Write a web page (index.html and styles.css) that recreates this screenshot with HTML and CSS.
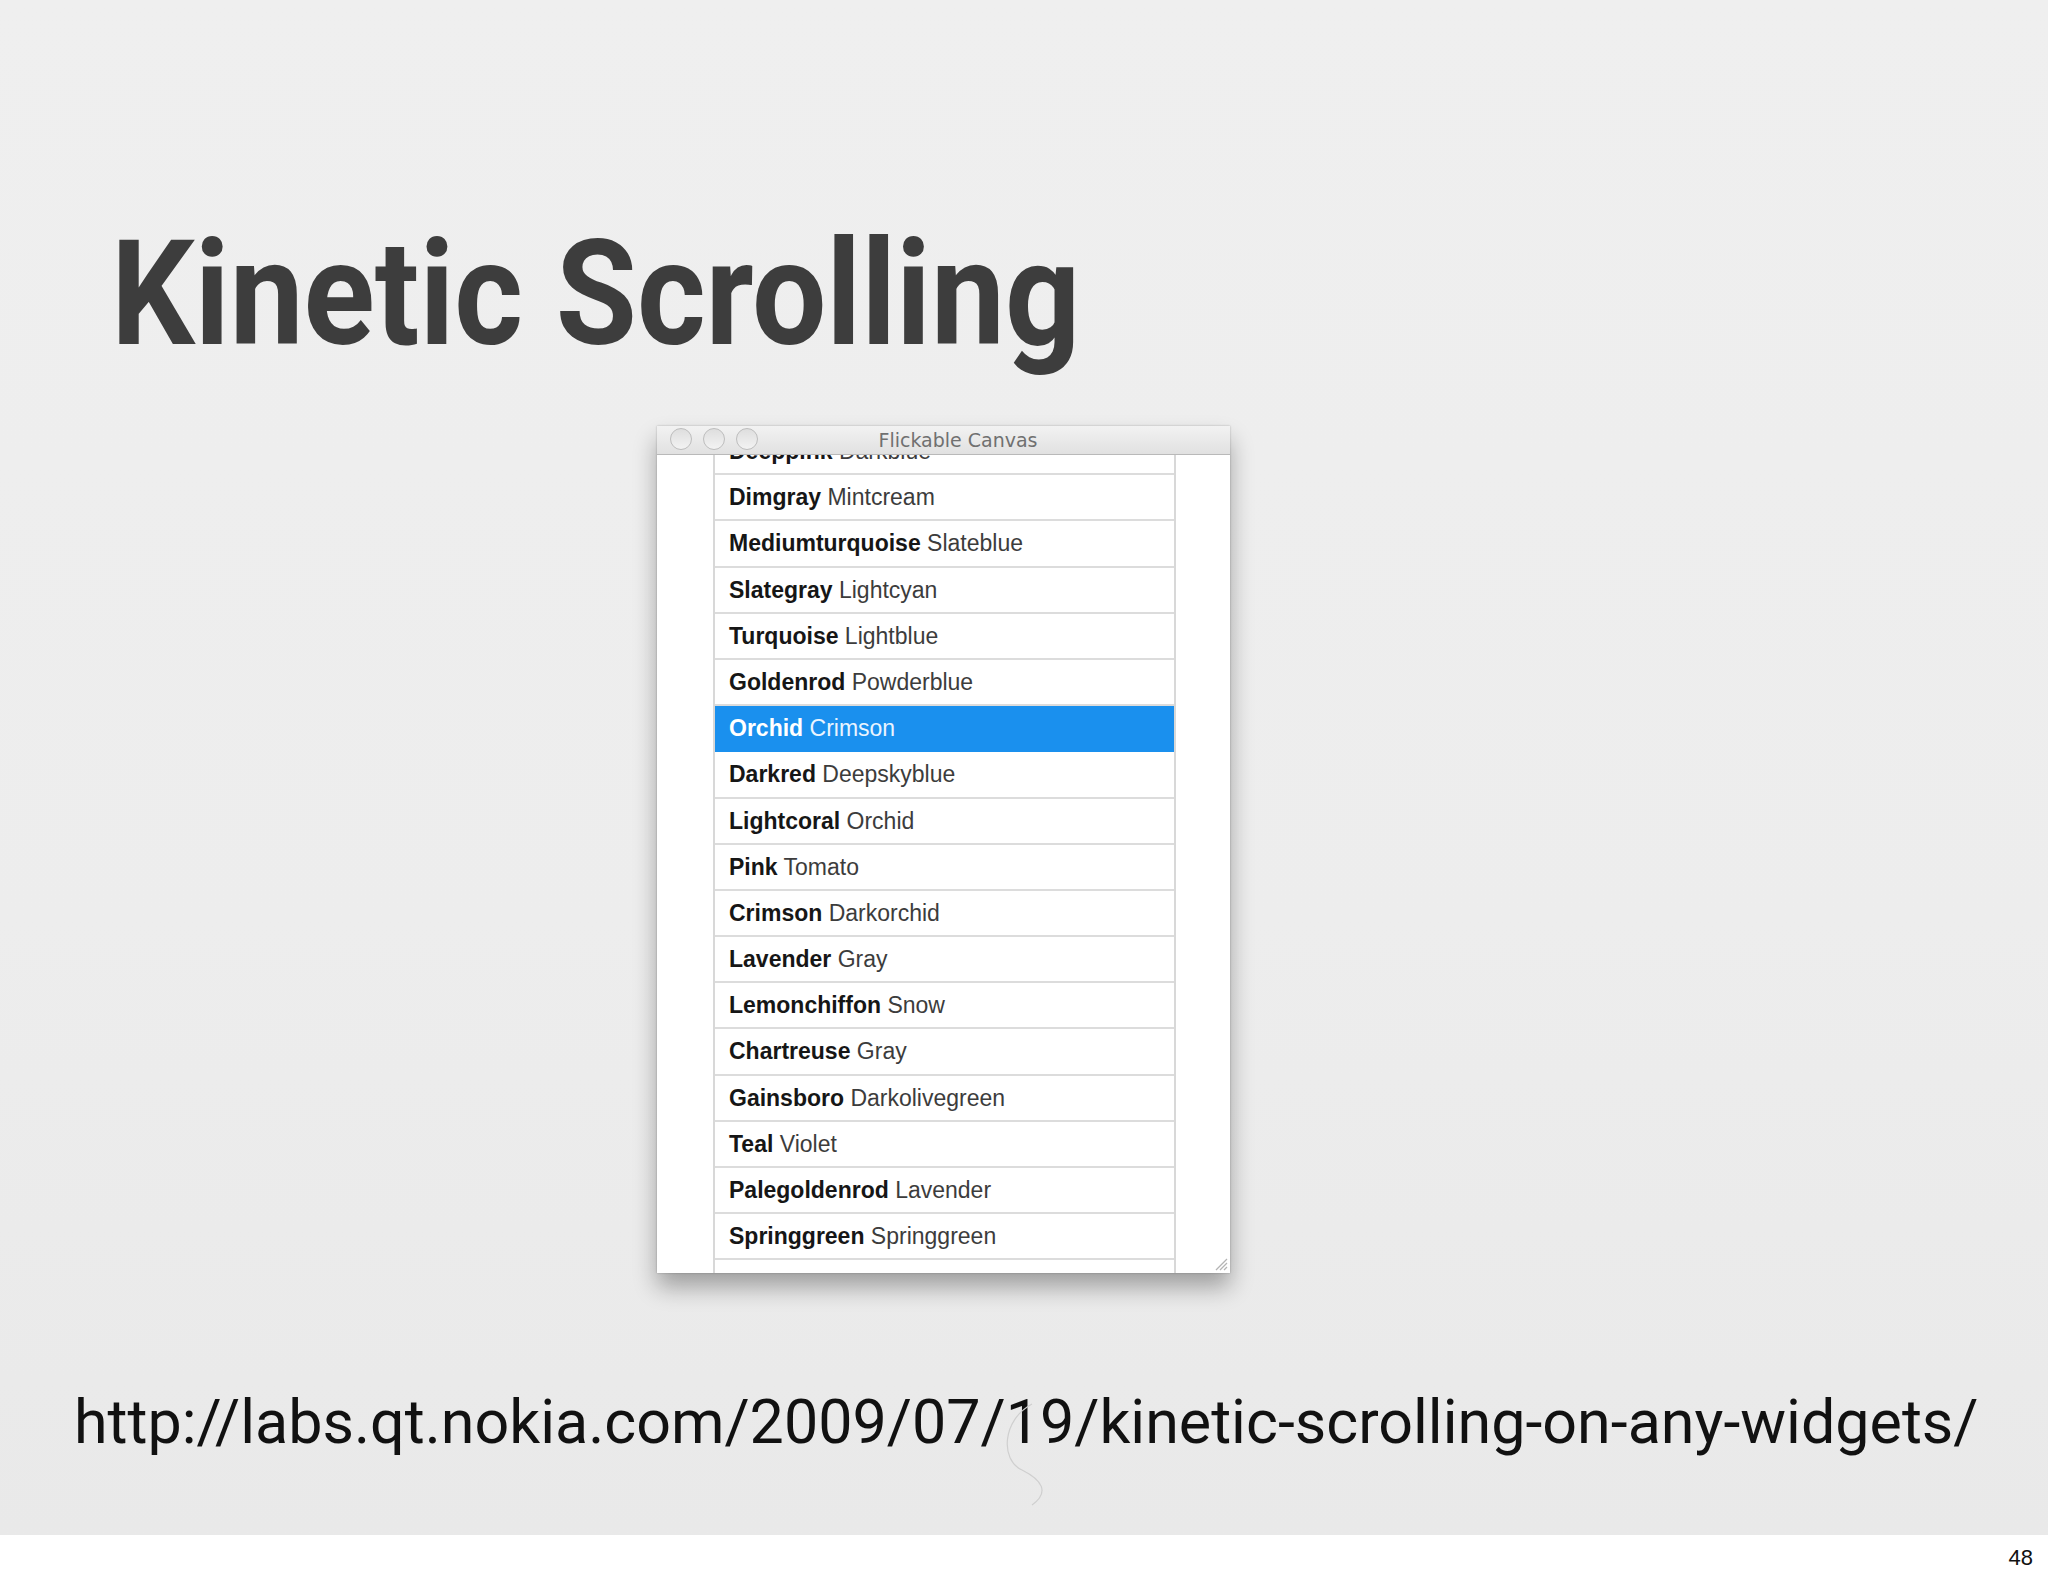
FILE: index.html
```html
<!DOCTYPE html>
<html>
<head>
<meta charset="utf-8">
<title>Kinetic Scrolling</title>
<link rel="stylesheet" href="styles.css">
</head>
<body>
<div class="slide">
  <h1 class="title"><span class="title-text">Kinetic Scrolling</span></h1>
  <div class="window">
    <div class="titlebar">
      <div class="lights"><span class="light"></span><span class="light"></span><span class="light"></span></div>
      <div class="wtitle">Flickable Canvas</div>
    </div>
    <div class="content">
      <div class="list">
        <div class="rows">
          <div class="row"><b>Deeppink</b> Darkblue</div>
          <div class="row"><b>Dimgray</b> Mintcream</div>
          <div class="row"><b>Mediumturquoise</b> Slateblue</div>
          <div class="row"><b>Slategray</b> Lightcyan</div>
          <div class="row"><b>Turquoise</b> Lightblue</div>
          <div class="row"><b>Goldenrod</b> Powderblue</div>
          <div class="row selected"><b>Orchid</b> Crimson</div>
          <div class="row"><b>Darkred</b> Deepskyblue</div>
          <div class="row"><b>Lightcoral</b> Orchid</div>
          <div class="row"><b>Pink</b> Tomato</div>
          <div class="row"><b>Crimson</b> Darkorchid</div>
          <div class="row"><b>Lavender</b> Gray</div>
          <div class="row"><b>Lemonchiffon</b> Snow</div>
          <div class="row"><b>Chartreuse</b> Gray</div>
          <div class="row"><b>Gainsboro</b> Darkolivegreen</div>
          <div class="row"><b>Teal</b> Violet</div>
          <div class="row"><b>Palegoldenrod</b> Lavender</div>
          <div class="row"><b>Springgreen</b> Springgreen</div>
          <div class="row empty"></div>
        </div>
      </div>
      <svg class="grip" width="16" height="16" viewBox="0 0 16 16">
        <path d="M15 4 L4 15 M15 8 L8 15 M15 12 L12 15" stroke="#b4b4b4" stroke-width="1.3" fill="none"/>
      </svg>
    </div>
  </div>
  <div class="url">http://labs.qt.nokia.com/2009/07/19/kinetic-scrolling-on-any-widgets/</div>
  <svg class="swirl" width="80" height="110" viewBox="0 0 80 110">
    <path d="M42 4 C 12 20, 10 60, 32 70 C 52 80, 60 92, 42 105" stroke="#cfcfcf" stroke-width="1.2" fill="none"/>
  </svg>
</div>
<div class="footer"><span class="pagenum">48</span></div>
</body>
</html>
```

FILE: styles.css
```css
html, body {
  margin: 0;
  padding: 0;
}
body {
  width: 2048px;
  height: 1576px;
  overflow: hidden;
  background: #ffffff;
  font-family: "Liberation Sans", Arial, sans-serif;
}
.slide {
  position: relative;
  height: 1535px;
  background: linear-gradient(180deg, #efefef 0%, #ededed 60%, #e9e9e9 100%);
  display: flex;
  flex-direction: column;
}
.title {
  margin: 222px 0 0 111px;
  height: 146px;
  font-family: Roboto, "Open Sans", sans-serif;
  font-weight: 700;
  font-size: 146px;
  line-height: 146px;
  color: #3d3d3d;
  white-space: nowrap;
}
.title-text {
  display: inline-block;
  transform-origin: 0 50%;
  transform: scaleX(0.903);
}
.window {
  margin: 58px 0 0 657px;
  width: 573px;
  height: 847px;
  background: #ffffff;
  display: flex;
  flex-direction: column;
  box-shadow: 0 14px 22px rgba(0,0,0,0.32), 0 0 2px rgba(0,0,0,0.25);
}
.titlebar {
  position: relative;
  height: 28px;
  flex: none;
  background: linear-gradient(180deg, #f2f2f2 0%, #e1e1e1 100%);
  border-bottom: 1px solid #b9b9b9;
  display: flex;
  align-items: flex-start;
  z-index: 2;
}
.lights {
  display: flex;
  gap: 11px;
  padding-left: 13px;
  padding-top: 2px;
}
.light {
  width: 22px;
  height: 22px;
  border-radius: 50%;
  border: 1.5px solid #bdbdbd;
  background: linear-gradient(180deg, #dedede, #f3f3f3);
  box-sizing: border-box;
}
.wtitle {
  flex: 1;
  text-align: center;
  font-family: "DejaVu Sans", "Liberation Sans", sans-serif;
  font-size: 19px;
  line-height: 28px;
  color: #707070;
  position: relative;
  left: -36px;
}
.content {
  position: relative;
  flex: 1;
  overflow: hidden;
  display: flex;
}
.list {
  margin-left: 56px;
  width: 459px;
  border-left: 2px solid #d8d8d8;
  border-right: 2px solid #d8d8d8;
  overflow: hidden;
}
.rows {
  margin-top: -26px;
}
.row {
  height: 44.2px;
  line-height: 44px;
  border-bottom: 2px solid #dcdcdc;
  padding-left: 14px;
  font-size: 23px;
  color: #3c3c3c;
  white-space: nowrap;
}
.row b {
  color: #161616;
  font-weight: 700;
}
.row.selected {
  background: #1a90ee;
  color: #eaf4ff;
  border-bottom-color: #1a90ee;
}
.row.selected b {
  color: #ffffff;
}
.grip {
  position: absolute;
  right: 2px;
  bottom: 2px;
}
.url {
  margin: 119px 0 0 74px;
  height: 61px;
  font-family: Roboto, "Open Sans", sans-serif;
  font-weight: 400;
  font-size: 61px;
  line-height: 61px;
  color: #111111;
  white-space: nowrap;
}
.swirl {
  position: absolute;
  left: 990px;
  top: 1400px;
}
.footer {
  height: 41px;
  background: #ffffff;
  position: relative;
}
.pagenum {
  position: absolute;
  right: 15px;
  top: 10px;
  font-size: 22px;
  color: #111;
}
```
